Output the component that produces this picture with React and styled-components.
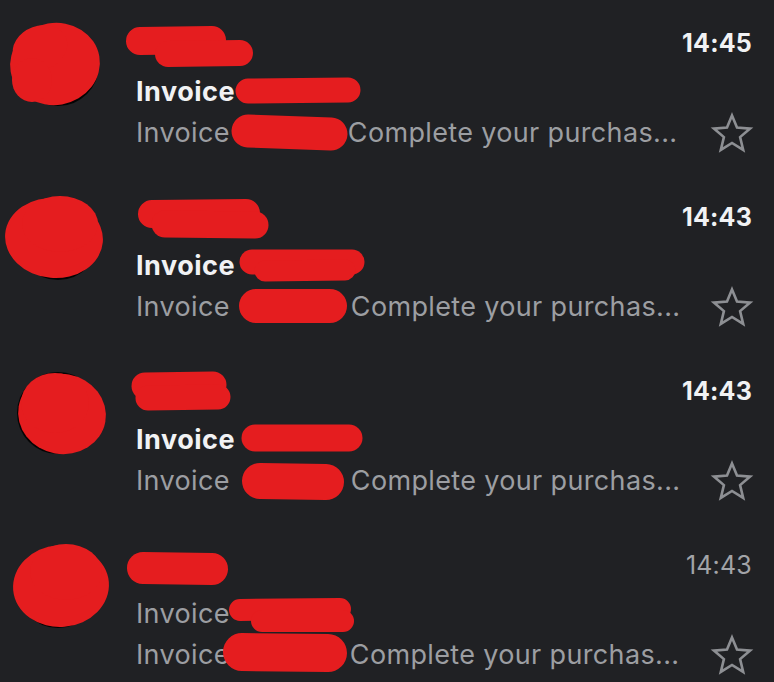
import React from 'react';
import styled, { createGlobalStyle } from 'styled-components';

const Global = createGlobalStyle`
  html, body { margin: 0; padding: 0; background: #202124; overflow: hidden; }
  body { font-family: Inter, "Liberation Sans", sans-serif; -webkit-font-smoothing: antialiased; }
`;

const List = styled.div`
  display: flex;
  flex-direction: column;
  width: 774px;
  height: 682px;
  overflow: hidden;
  background: #202124;
`;

const Row = styled.div`
  position: relative;
  flex: none;
  display: flex;
  height: 174px;
  box-sizing: border-box;
  padding: 21px 22px 21px 0;
`;

const AvatarCol = styled.div`
  width: 136px;
  flex: none;
`;

const Avatar = styled.div`
  width: 82px;
  height: 82px;
  border-radius: 50%;
  background: #040404;
  margin: 3px 0 0 17px;
`;

const Content = styled.div`
  flex: 1;
  min-width: 0;
  display: flex;
  flex-direction: column;
`;

const Header = styled.div`
  height: 44px;
  display: flex;
  align-items: center;
  justify-content: space-between;
`;

const Sender = styled.span`
  width: 110px;
  height: 30px;
`;

const Time = styled.span`
  font-size: 25px;
  line-height: 44px;
  font-weight: ${p => (p.$unread ? 700 : 400)};
  color: ${p => (p.$unread ? '#f1f2f4' : '#a2a4a8')};
  letter-spacing: 0.2px;
`;

const Subject = styled.div`
  margin-top: 7px;
  height: 40px;
  display: flex;
  align-items: center;
  font-size: 27px;
  line-height: 40px;
  letter-spacing: ${p => (p.$unread ? 0.5 : 0.35)}px;
  font-weight: ${p => (p.$unread ? 700 : 400)};
  color: ${p => (p.$unread ? '#f1f2f4' : '#9c9ea2')};
  white-space: nowrap;
`;

const Preview = styled.div`
  height: 41px;
  display: flex;
  align-items: center;
  gap: 12px;
`;

const Snippet = styled.div`
  flex: 1;
  min-width: 0;
  display: flex;
  align-items: center;
  font-size: 27px;
  line-height: 40px;
  letter-spacing: 0.35px;
  color: #9c9ea2;
  white-space: nowrap;
  overflow: hidden;
`;

const Hidden = styled.span`
  display: inline-block;
  flex: none;
  width: ${p => p.$w}px;
  height: 1em;
`;

const StarIcon = styled.svg`
  flex: none;
  width: 40px;
  height: 38px;
  overflow: visible;
`;

const Redaction = styled.svg`
  position: absolute;
  left: 0;
  top: 0;
  width: 774px;
  height: 174px;
  pointer-events: none;
  overflow: visible;
`;

const RED = '#e51d1f';

function Star() {
  return (
    <StarIcon viewBox="0 0 40 38">
      <polygon
        points="20,1.5 25,13.6 38.1,14.6 28.1,23.1 31.2,35.9 20,29 8.8,35.9 11.9,23.1 1.9,14.6 15,13.6"
        fill="none"
        stroke="#8d8f93"
        strokeWidth="2.6"
        strokeLinejoin="miter"
      />
    </StarIcon>
  );
}

function Scribbles({ avatar, strokes }) {
  return (
    <Redaction viewBox="0 0 774 174">
      {avatar.map((e, i) => (
        <ellipse key={'a' + i} cx={e[0]} cy={e[1]} rx={e[2]} ry={e[3]} transform={`rotate(${e[4] || 0} ${e[0]} ${e[1]})`} fill={RED} />
      ))}
      {strokes.map((s, i) => (
        <line key={'s' + i} x1={s[0]} y1={s[1]} x2={s[2]} y2={s[3]} stroke={RED} strokeWidth={s[4]} strokeLinecap="round" />
      ))}
    </Redaction>
  );
}

const emails = [
  {
    time: '14:45', unread: true, gap: 118,
    avatar: [[55, 64, 45, 41, -10], [40, 48, 28, 22, -20], [32, 80, 20, 22, 0]],
    strokes: [
      [140, 41, 212, 40, 28], [168, 54, 240, 53, 26],
      [248, 91, 348, 90, 25],
      [248, 131, 331, 134, 33],
    ],
  },
  {
    time: '14:43', unread: true, gap: 121,
    avatar: [[54, 64, 49, 40, 5], [60, 50, 38, 28, 0]],
    strokes: [
      [152, 40, 246, 39, 28], [165, 50, 255, 51, 27],
      [252, 88, 352, 88, 25], [265, 97, 345, 96, 21],
      [256, 132, 330, 132, 34],
    ],
  },
  {
    time: '14:43', unread: true, gap: 121,
    avatar: [[62, 66, 44, 40, 10], [55, 55, 34, 30, 0]],
    strokes: [
      [145, 38, 213, 37, 27], [148, 50, 218, 49, 25],
      [255, 90, 349, 90, 27],
      [260, 133, 326, 134, 36],
    ],
  },
  {
    time: '14:43', unread: false, gap: 120,
    avatar: [[61, 64, 48, 41, -5], [66, 50, 36, 28, 0]],
    strokes: [
      [143, 46, 212, 47, 32],
      [240, 88, 340, 87, 22], [262, 99, 343, 99, 22],
      [242, 130, 328, 131, 38],
    ],
  },
];

function EmailRow({ email }) {
  return (
    <Row>
      <AvatarCol>
        <Avatar />
      </AvatarCol>
      <Content>
        <Header>
          <Sender />
          <Time $unread={email.unread}>{email.time}</Time>
        </Header>
        <Subject $unread={email.unread}>
          Invoice
        </Subject>
        <Preview>
          <Snippet>
            Invoice
            <Hidden $w={email.gap} />
            Complete your purchas...
          </Snippet>
          <Star />
        </Preview>
      </Content>
      <Scribbles avatar={email.avatar} strokes={email.strokes} />
    </Row>
  );
}

export default function App() {
  return (
    <>
      <Global />
      <List>
        {emails.map((e, i) => (
          <EmailRow key={i} email={e} />
        ))}
      </List>
    </>
  );
}
